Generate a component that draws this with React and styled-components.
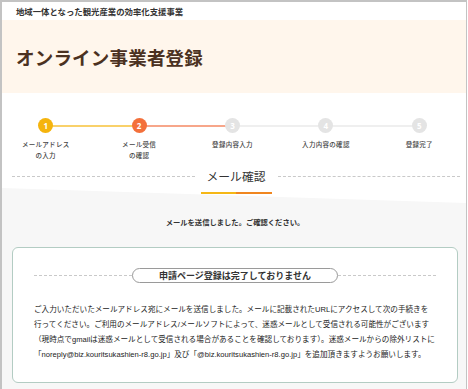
import React from 'react';
import styled, { createGlobalStyle } from 'styled-components';

const GlobalStyle = createGlobalStyle`
  html, body {
    margin: 0;
    padding: 0;
    background: #fff;
  }
  body {
    font-family: "Noto Sans CJK JP", "Noto Sans", sans-serif;
    color: #333;
  }
  * { box-sizing: border-box; }
`;

const Frame = styled.div`
  width: 467px;
  height: 389px;
  border-top: 2px solid #c3c3c3;
  border-left: 2px solid #c3c3c3;
  border-right: 1px solid #c3c3c3;
  overflow: hidden;
  display: flex;
  flex-direction: column;
`;

const TopBar = styled.div`
  height: 18px;
  display: flex;
  align-items: center;
  padding-left: 14px;
  font-size: 8.4px;
  font-weight: 700;
  color: #333;
  background: #fff;
`;

const Header = styled.div`
  height: 73px;
  background: #fff6ec;
  display: flex;
  align-items: center;
  padding-left: 14px;
`;

const Title = styled.h1`
  margin: 0;
  font-size: 18.5px;
  font-weight: 700;
  color: #4b3121;
  letter-spacing: 0.2px;
`;

const Stepper = styled.ol`
  list-style: none;
  margin: 0;
  padding: 25px 0 0 0;
  display: grid;
  grid-template-columns: repeat(5, 1fr);
  margin-left: -3px;
`;

const Step = styled.li`
  position: relative;
  display: flex;
  flex-direction: column;
  align-items: center;

  &::before {
    content: '';
    display: ${p => (p.$last ? 'none' : 'block')};
    position: absolute;
    top: 6.5px;
    left: 50%;
    width: 100%;
    height: 2px;
    background: ${p => p.$line};
  }
`;

const Circle = styled.span`
  position: relative;
  z-index: 1;
  width: 15px;
  height: 15px;
  border-radius: 50%;
  background: ${p => p.$bg};
  color: #fff;
  font-family: "Open Sans", "Noto Sans", sans-serif;
  font-size: 8px;
  font-weight: 700;
  display: flex;
  align-items: center;
  justify-content: center;
`;

const StepLabel = styled.span`
  margin-top: 6px;
  font-size: 6.5px;
  line-height: 11px;
  font-weight: 500;
  color: #444;
  text-align: center;
  letter-spacing: 0.3px;
`;

const HeadingRow = styled.div`
  display: flex;
  align-items: center;
  padding: 0 6px 0 10px;
  margin-top: 6px;
  height: 18px;
`;

const Dashed = styled.span`
  flex: 1;
  border-top: 1px dashed #c9c9c9;
`;

const Heading = styled.h2`
  position: relative;
  margin: 0;
  padding: 0 12px;
  font-size: 11.8px;
  line-height: 16px;
  font-weight: 400;
  color: #333;

  &::after {
    content: '';
    position: absolute;
    left: 6px;
    right: 6px;
    bottom: -10px;
    height: 2px;
    background: linear-gradient(to right, #f5b716 50%, #f0861f 50%);
  }
`;

const GraySection = styled.div`
  flex: 1;
  margin-top: 3px;
  background: #f7f7f7;
  clip-path: polygon(0 0, 100% 15px, 100% 100%, 0 100%);
  display: flex;
  flex-direction: column;
  padding: 28px 8px 6px 10px;
`;

const Message = styled.p`
  margin: 0;
  text-align: center;
  font-size: 7.3px;
  line-height: 12px;
  font-weight: 700;
  color: #333;
`;

const Card = styled.div`
  flex: 1;
  margin-top: 19px;
  background: #fff;
  border: 1px solid #b3ccc3;
  border-radius: 6px;
  padding: 20px 21px 0 21px;
`;

const PillRow = styled.div`
  display: flex;
  align-items: center;
`;

const Pill = styled.div`
  height: 15px;
  padding: 0 26px;
  border: 1px solid #9a9a9a;
  border-radius: 8px;
  display: flex;
  align-items: center;
  font-size: 9px;
  font-weight: 700;
  color: #333;
`;

const Body = styled.p`
  margin: 19px 0 0 0;
  font-family: "Liberation Sans", "Noto Sans CJK JP", sans-serif;
  font-size: 7.6px;
  line-height: 15px;
  font-weight: 400;
  color: #222;
  white-space: nowrap;
`;

const steps = [
  { n: 1, label: ['メールアドレス', 'の入力'], bg: '#f5b40d', line: '#f9d16a' },
  { n: 2, label: ['メール受信', 'の確認'], bg: '#f3703b', line: '#f7a68a' },
  { n: 3, label: ['登録内容入力'], bg: '#e4e4e4', line: '#efefef' },
  { n: 4, label: ['入力内容の確認'], bg: '#e4e4e4', line: '#efefef' },
  { n: 5, label: ['登録完了'], bg: '#e4e4e4', line: '#efefef' },
];

export default function App() {
  return (
    <>
      <GlobalStyle />
      <Frame>
        <TopBar>地域一体となった観光産業の効率化支援事業</TopBar>
        <Header>
          <Title>オンライン事業者登録</Title>
        </Header>
        <Stepper>
          {steps.map((s, i) => (
            <Step key={s.n} $line={s.line} $last={i === steps.length - 1}>
              <Circle $bg={s.bg}>{s.n}</Circle>
              <StepLabel>
                {s.label.map((l, j) => (
                  <React.Fragment key={j}>
                    {j > 0 && <br />}
                    {l}
                  </React.Fragment>
                ))}
              </StepLabel>
            </Step>
          ))}
        </Stepper>
        <HeadingRow>
          <Dashed />
          <Heading>メール確認</Heading>
          <Dashed />
        </HeadingRow>
        <GraySection>
          <Message>メールを送信しました。ご確認ください。</Message>
          <Card>
            <PillRow>
              <Dashed />
              <Pill>申請ページ登録は完了しておりません</Pill>
              <Dashed />
            </PillRow>
            <Body>
              ご入力いただいたメールアドレス宛にメールを送信しました。メールに記載されたURLにアクセスして次の手続きを
              <br />
              行ってください。ご利用のメールアドレス/メールソフトによって、迷惑メールとして受信される可能性がございます
              <br />
              （現時点でgmailは迷惑メールとして受信される場合があることを確認しております）。迷惑メールからの除外リストに
              <br />
              「noreply@biz.kouritsukashien-r8.go.jp」及び「@biz.kouritsukashien-r8.go.jp」を追加頂きますようお願いします。
            </Body>
          </Card>
        </GraySection>
      </Frame>
    </>
  );
}
